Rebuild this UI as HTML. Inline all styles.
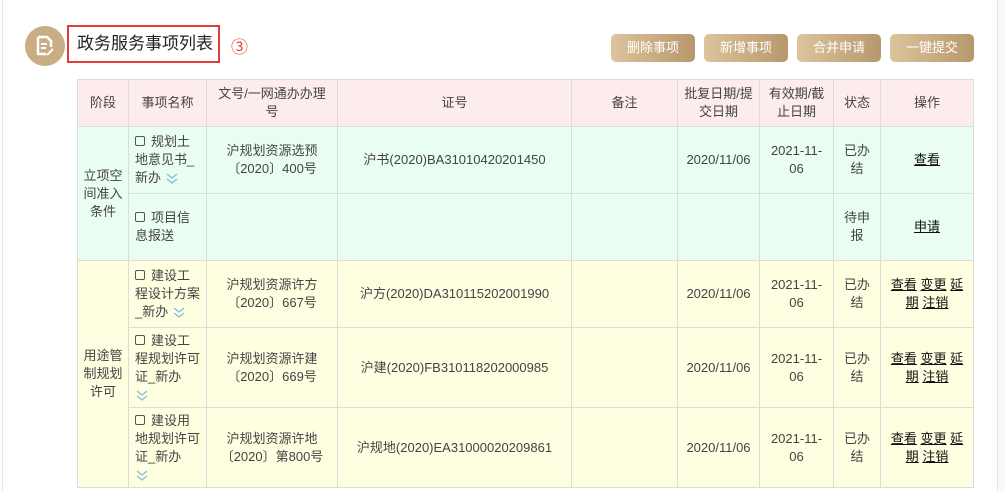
<!DOCTYPE html>
<html><head><meta charset="utf-8"><style>
body{margin:0;width:1005px;height:491px;overflow:hidden;background:#fff;font-family:"Liberation Sans","Noto Sans CJK SC",sans-serif;color:#444;position:relative}
.lb{position:absolute;left:2px;top:0;width:1px;height:491px;background:#e8e8e8}
.rb{position:absolute;left:997px;top:0;width:8px;height:491px;background:#f7f8fa;border-left:1px solid #e3e3e3}
.icon{position:absolute;left:25px;top:26px;width:40px;height:40px;border-radius:50%;background:#c9ad84}
.title{position:absolute;left:67px;top:25px;width:153px;height:38px;border:2px solid #e23b3b;box-sizing:border-box;font-size:17px;line-height:34px;padding-left:8px;color:#222}
.num{position:absolute;left:231px;top:33px;color:#e23b3b;font-size:17px}
.btn{position:absolute;top:34px;height:28px;width:84px;border-radius:5px;background:linear-gradient(90deg,#dcc49c,#b8976c);color:#fff;font-size:13px;line-height:28px;text-align:center}
table{position:absolute;left:77px;top:79px;border-collapse:collapse;table-layout:fixed;font-size:13px;line-height:18px}
td{border:1px solid #dcdcdc;text-align:center;vertical-align:middle;padding:0 5px}
.h td{background:#fdecec;height:46px}
.g td{background:#e9fdf1;height:66px}
.y td{background:#fefee0}
.n{text-align:left;padding:0 6px}
.cb{display:inline-block;width:8px;height:8px;border:1px solid #555;border-radius:2px;margin-right:6px;vertical-align:0}
.ch{display:inline-block;width:14px;height:14px;vertical-align:-3px}
u{color:#111}
</style></head><body>
<div class="lb"></div><div class="rb"></div>
<div class="icon"><svg width="40" height="40"><path d="M13 11h9l4 4v6M13 11v17h8" fill="none" stroke="#fff" stroke-width="2.5"/><path d="M16 18h6M16 22h5" stroke="#fff" stroke-width="2"/><path d="M22 29l6-6" stroke="#fff" stroke-width="2"/></svg></div>
<div class="title">政务服务事项列表</div>
<div class="num">③</div>
<div class="btn" style="left:611px">删除事项</div>
<div class="btn" style="left:704px">新增事项</div>
<div class="btn" style="left:797px">合并申请</div>
<div class="btn" style="left:890px">一键提交</div>
<table>
<colgroup><col style="width:51px"><col style="width:78px"><col style="width:131px"><col style="width:234px"><col style="width:106px"><col style="width:82px"><col style="width:74px"><col style="width:47px"><col style="width:93px"></colgroup>
<tr class="h"><td>阶段</td><td>事项名称</td><td>文号/一网通办办理号</td><td>证号</td><td>备注</td><td>批复日期/提交日期</td><td>有效期/截止日期</td><td>状态</td><td>操作</td></tr>
<tr class="g"><td rowspan="2">立项空间准入条件</td><td class="n"><span class="cb"></span>规划土地意见书_新办 <svg class="ch"><path d="M2 3l5 4 5-4M2 8l5 4 5-4" fill="none" stroke="#86bde0" stroke-width="1.3"/></svg></td><td>沪规划资源选预〔2020〕400号</td><td>沪书(2020)BA31010420201450</td><td></td><td>2020/11/06</td><td>2021-11-06</td><td>已办结</td><td><u>查看</u></td></tr>
<tr class="g"><td class="n"><span class="cb"></span>项目信息报送</td><td></td><td></td><td></td><td></td><td></td><td>待申报</td><td><u>申请</u></td></tr>
<tr class="y"><td rowspan="3">用途管制规划许可</td><td class="n" style="height:66px"><span class="cb"></span>建设工程设计方案_新办 <svg class="ch"><path d="M2 3l5 4 5-4M2 8l5 4 5-4" fill="none" stroke="#86bde0" stroke-width="1.3"/></svg></td><td>沪规划资源许方〔2020〕667号</td><td>沪方(2020)DA310115202001990</td><td></td><td>2020/11/06</td><td>2021-11-06</td><td>已办结</td><td><u>查看</u> <u>变更</u> <u>延期</u> <u>注销</u></td></tr>
<tr class="y"><td class="n" style="height:79px"><span class="cb"></span>建设工程规划许可证_新办<br><svg class="ch"><path d="M2 3l5 4 5-4M2 8l5 4 5-4" fill="none" stroke="#86bde0" stroke-width="1.3"/></svg></td><td>沪规划资源许建〔2020〕669号</td><td>沪建(2020)FB310118202000985</td><td></td><td>2020/11/06</td><td>2021-11-06</td><td>已办结</td><td><u>查看</u> <u>变更</u> <u>延期</u> <u>注销</u></td></tr>
<tr class="y"><td class="n" style="height:79px"><span class="cb"></span>建设用地规划许可证_新办<br><svg class="ch"><path d="M2 3l5 4 5-4M2 8l5 4 5-4" fill="none" stroke="#86bde0" stroke-width="1.3"/></svg></td><td>沪规划资源许地〔2020〕第800号</td><td>沪规地(2020)EA31000020209861</td><td></td><td>2020/11/06</td><td>2021-11-06</td><td>已办结</td><td><u>查看</u> <u>变更</u> <u>延期</u> <u>注销</u></td></tr>
</table>
</body></html>
